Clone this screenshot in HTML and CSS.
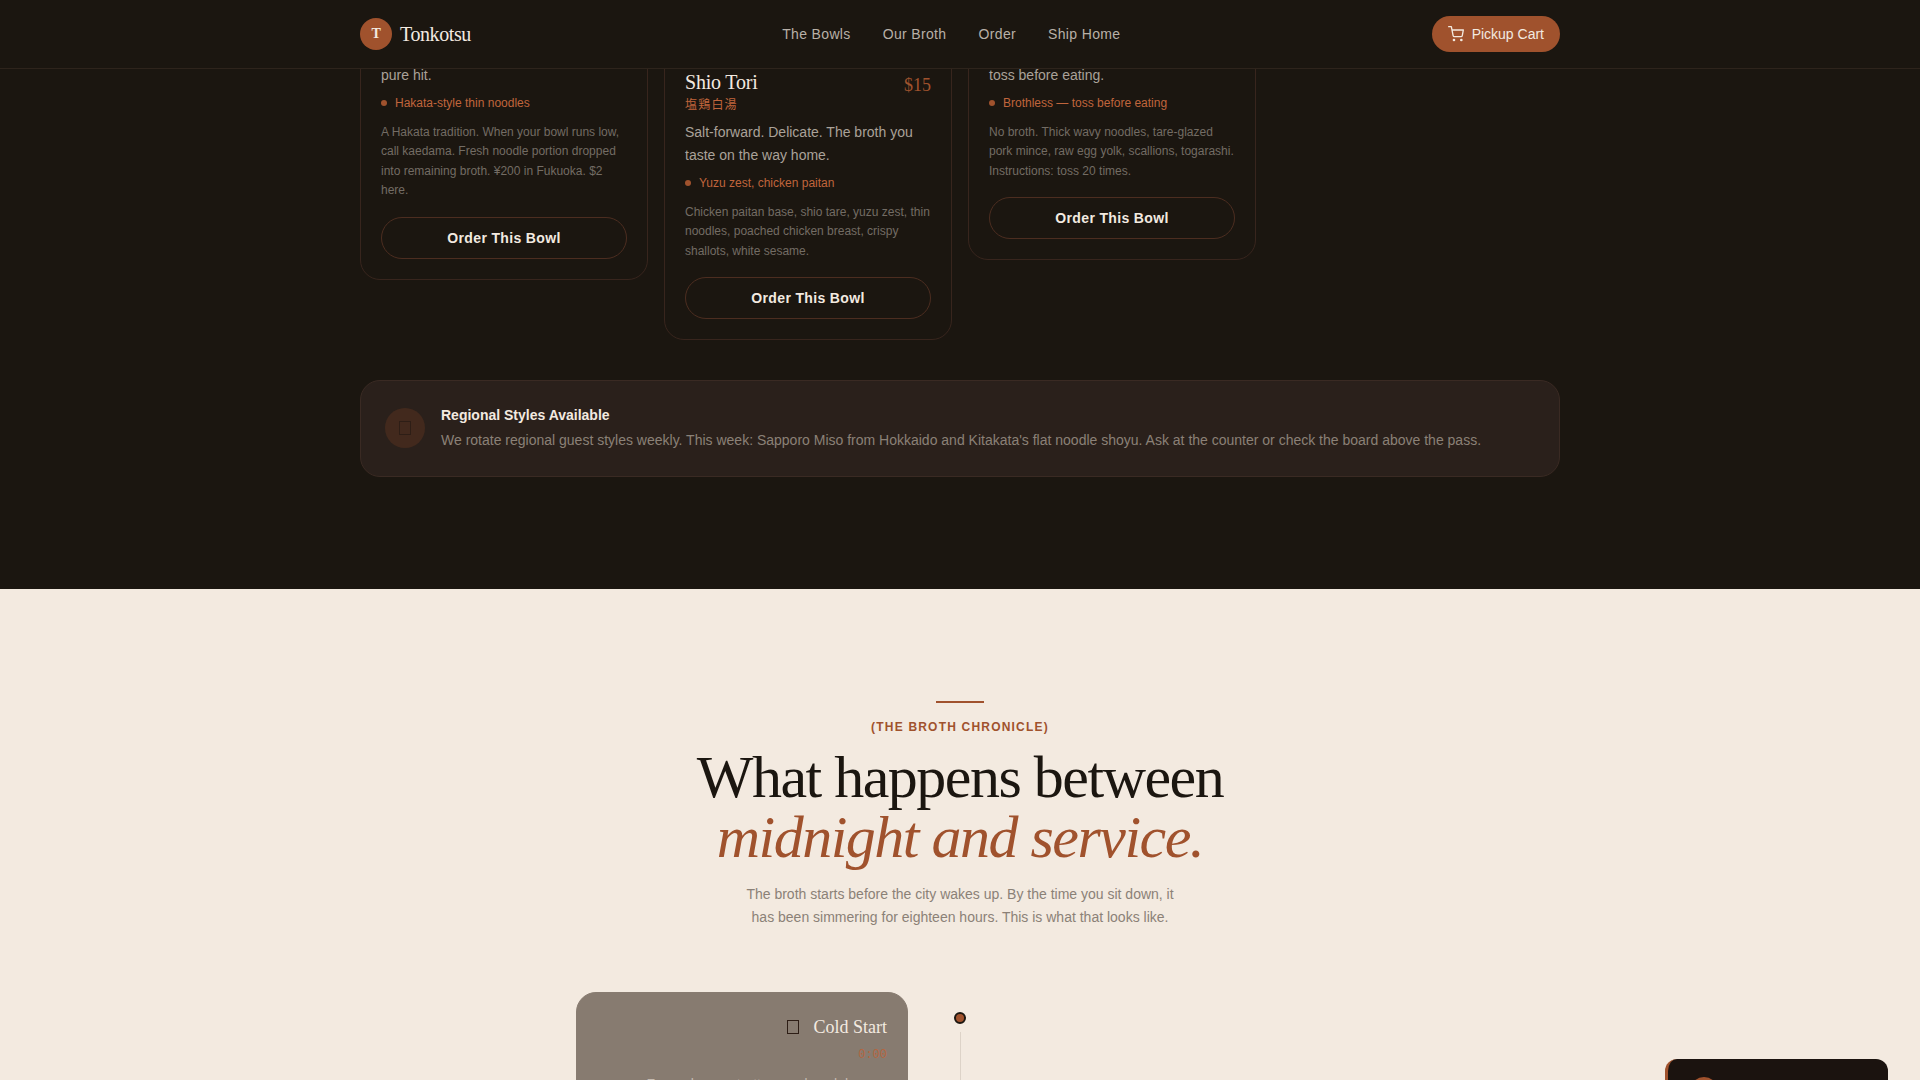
FILE: index.html
```html
<!DOCTYPE html>
<html lang="en">

<head>
    <meta charset="UTF-8">
    <meta name="viewport" content="width=device-width, initial-scale=1.0">
    <title>Tonkotsu</title>
    <link rel="stylesheet" href="styles.css">
</head>

<body>
    <header class="nav">
        <div class="container nav-inner">
            <a href="#" class="brand"><span class="brand-mark">T</span>Tonkotsu</a>
            <nav class="nav-links">
                <a href="#bowls">The Bowls</a>
                <a href="#broth">Our Broth</a>
                <a href="#order">Order</a>
                <a href="#ship">Ship Home</a>
            </nav>
            <button type="button" class="cart-button">
                <svg width="16" height="16" viewBox="0 0 24 24" fill="none" stroke="currentColor" stroke-width="2" stroke-linecap="round" stroke-linejoin="round" aria-hidden="true">
                    <circle cx="9" cy="21" r="1"></circle>
                    <circle cx="20" cy="21" r="1"></circle>
                    <path d="M1 1h4l2.68 13.39a2 2 0 0 0 2 1.61h9.72a2 2 0 0 0 2-1.61L23 6H6"></path>
                </svg>
                Pickup Cart
            </button>
        </div>
    </header>

    <main>
        <section class="bowls" id="bowls">
            <div class="container">
                <div class="bowl-grid">
                    <article class="bowl">
                        <p class="bowl-tagline">pure hit.</p>
                        <p class="bowl-note">Hakata-style thin noodles</p>
                        <p class="bowl-desc">A Hakata tradition. When your bowl runs low, call kaedama. Fresh noodle portion dropped into remaining broth. ¥200 in Fukuoka. $2 here.</p>
                        <button type="button" class="bowl-button">Order This Bowl</button>
                    </article>
                    <article class="bowl">
                        <div class="bowl-head">
                            <div>
                                <h3 class="bowl-name">Shio Tori</h3>
                                <span class="bowl-kanji" lang="ja">塩鶏白湯</span>
                            </div>
                            <span class="bowl-price">$15</span>
                        </div>
                        <p class="bowl-tagline">Salt-forward. Delicate. The broth you taste on the way home.</p>
                        <p class="bowl-note">Yuzu zest, chicken paitan</p>
                        <p class="bowl-desc">Chicken paitan base, shio tare, yuzu zest, thin noodles, poached chicken breast, crispy shallots, white sesame.</p>
                        <button type="button" class="bowl-button">Order This Bowl</button>
                    </article>
                    <article class="bowl">
                        <p class="bowl-tagline">toss before eating.</p>
                        <p class="bowl-note">Brothless — toss before eating</p>
                        <p class="bowl-desc">No broth. Thick wavy noodles, tare-glazed pork mince, raw egg yolk, scallions, togarashi. Instructions: toss 20 times.</p>
                        <button type="button" class="bowl-button">Order This Bowl</button>
                    </article>
                </div>

                <div class="regional">
                    <div class="regional-icon"><span class="glyph-box"></span></div>
                    <div>
                        <h4 class="regional-title">Regional Styles Available</h4>
                        <p class="regional-text">We rotate regional guest styles weekly. This week: Sapporo Miso from Hokkaido and Kitakata's flat noodle shoyu. Ask at the counter or check the board above the pass.</p>
                    </div>
                </div>
            </div>
        </section>

        <section class="broth" id="broth">
            <div class="section-head">
                <span class="section-rule"></span>
                <p class="section-label">(The Broth Chronicle)</p>
                <h2 class="section-title">What happens between<br><em>midnight and service.</em></h2>
                <p class="section-text">The broth starts before the city wakes up. By the time you sit down, it has been simmering for eighteen hours. This is what that looks like.</p>
            </div>

            <div class="timeline">
                <div class="step">
                    <div class="step-card">
                        <h3 class="step-title"><span class="glyph-box"></span>Cold Start</h3>
                        <span class="step-time">0:00</span>
                        <p class="step-text">Femur bones, trotters and neck bones.</p>
                    </div>
                    <div class="step-marker"></div>
                </div>
            </div>
        </section>
    </main>

    <aside class="toast">
        <span class="toast-icon"></span>
    </aside>
</body>

</html>
```

FILE: styles.css
```css
:root {
    --ink: #1b1610;
    --cream: #f3eae0;
    --rust: #a0522d;
    --rust-light: #c0653c;
    --sans: "Liberation Sans", Arial, "Noto Sans CJK JP", sans-serif;
    --serif: "Liberation Serif", "Times New Roman", serif;
    --mono: "Liberation Mono", "Courier New", monospace;
}

*,
*::before,
*::after {
    box-sizing: border-box;
    margin: 0;
    padding: 0;
}

body {
    font-family: var(--sans);
    font-size: 14px;
    line-height: 1.625;
    background-color: var(--cream);
    color: var(--ink);
    height: 100vh;
    overflow: hidden;
}

button {
    font-family: inherit;
    cursor: pointer;
}

.container {
    max-width: 1200px;
    margin: 0 auto;
}

/* Navigation */

.nav {
    position: fixed;
    top: 0;
    left: 0;
    right: 0;
    z-index: 10;
    background-color: var(--ink);
    border-bottom: 1px solid #2e241c;
}

.nav-inner {
    display: flex;
    justify-content: space-between;
    align-items: center;
    padding: 16px 0;
}

.brand {
    display: flex;
    align-items: center;
    gap: 8px;
    font-family: var(--serif);
    font-size: 20px;
    letter-spacing: -0.02em;
    color: var(--cream);
    text-decoration: none;
}

.brand-mark {
    width: 32px;
    height: 32px;
    border-radius: 50%;
    background-color: var(--rust);
    display: flex;
    justify-content: center;
    align-items: center;
    font-size: 14px;
    font-weight: bold;
}

.nav-links {
    display: flex;
    gap: 32px;
}

.nav-links a {
    color: #b8b0a7;
    letter-spacing: 0.025em;
    text-decoration: none;
}

.cart-button {
    display: flex;
    align-items: center;
    gap: 8px;
    height: 36px;
    padding: 0 16px;
    border: none;
    border-radius: 18px;
    background-color: var(--rust);
    color: var(--cream);
    font-size: 14px;
}

/* Bowls */

.bowls {
    background-color: var(--ink);
    padding-bottom: 112px;
}

.bowl-grid {
    display: grid;
    grid-template-columns: repeat(4, 1fr);
    align-items: start;
    gap: 16px;
}

.bowl {
    padding: 63px 20px 20px;
    border: 1px solid #38251d;
    border-radius: 20px;
}

.bowl-head {
    display: flex;
    justify-content: space-between;
    align-items: flex-start;
    margin: 5px 0 6px;
}

.bowl-name {
    font-family: var(--serif);
    font-size: 20px;
    font-weight: normal;
    line-height: 26px;
    letter-spacing: -0.01em;
    color: var(--cream);
}

.bowl-kanji {
    display: block;
    font-size: 12px;
    line-height: 20px;
    letter-spacing: 0.1em;
    color: var(--rust-light);
}

.bowl-price {
    font-family: var(--serif);
    font-size: 18px;
    line-height: 32px;
    color: var(--rust);
}

.bowl-tagline {
    margin-bottom: 8px;
    color: #aaa299;
}

.bowl-note {
    display: flex;
    align-items: center;
    gap: 8px;
    margin-bottom: 12px;
    font-size: 12px;
    line-height: 16px;
    color: var(--rust-light);
}

.bowl-note::before {
    content: "";
    width: 6px;
    height: 6px;
    border-radius: 50%;
    background-color: var(--rust);
}

.bowl-desc {
    font-size: 12px;
    margin-bottom: 16px;
    color: #736c64;
}

.bowl-button {
    width: 100%;
    height: 42px;
    border: 1px solid #4c2d20;
    border-radius: 21px;
    background-color: transparent;
    color: var(--cream);
    font-size: 14px;
    font-weight: bold;
    letter-spacing: 0.025em;
}

.regional {
    display: flex;
    align-items: center;
    gap: 16px;
    margin-top: 40px;
    padding: 24px;
    border: 1px solid #3a2a23;
    border-radius: 20px;
    background-color: #2a201b;
}

.regional-icon {
    width: 40px;
    height: 40px;
    border-radius: 50%;
    background-color: #42291d;
    display: flex;
    justify-content: center;
    align-items: center;
}

.glyph-box {
    width: 12px;
    height: 14px;
    border: 1px solid #2e1e16;
}

.regional-title {
    font-size: 14px;
    line-height: 20px;
    margin-bottom: 4px;
    color: var(--cream);
}

.regional-text {
    color: #8b8177;
}

/* Broth */

.broth {
    padding-top: 112px;
}

.section-head {
    text-align: center;
    margin-bottom: 64px;
}

.section-rule {
    display: block;
    width: 48px;
    height: 2px;
    margin: 0 auto 16px;
    background-color: var(--rust);
}

.section-label {
    font-size: 12px;
    font-weight: bold;
    line-height: 16px;
    letter-spacing: 0.1em;
    text-transform: uppercase;
    color: var(--rust);
    margin-bottom: 12px;
}

.section-title {
    font-family: var(--serif);
    font-size: 60px;
    font-weight: normal;
    line-height: 60px;
    letter-spacing: -0.025em;
    margin-bottom: 16px;
}

.section-title em {
    color: var(--rust);
}

.section-text {
    max-width: 448px;
    margin: 0 auto;
    color: #8b8177;
}

.timeline {
    max-width: 768px;
    margin: 0 auto;
}

.step {
    display: grid;
    grid-template-columns: 1fr 104px 1fr;
}

.step-card {
    padding: 20px;
    border: 1px solid #887c71;
    border-radius: 20px;
    background-color: #877b70;
    text-align: right;
}

.step-title {
    display: flex;
    justify-content: flex-end;
    align-items: center;
    gap: 14px;
    font-family: var(--serif);
    font-size: 18px;
    font-weight: normal;
    line-height: 28px;
    color: var(--cream);
}

.step-time {
    display: block;
    margin-bottom: 4px;
    font-family: var(--mono);
    font-size: 12px;
    line-height: 28px;
    color: #b5653f;
}

.step-text {
    color: #c4bab0;
}

.step-marker {
    display: flex;
    flex-direction: column;
    align-items: center;
    gap: 8px;
    padding-top: 20px;
}

.step-marker::before {
    content: "";
    width: 12px;
    height: 12px;
    border: 2px solid var(--ink);
    border-radius: 50%;
    background-color: var(--rust);
}

.step-marker::after {
    content: "";
    flex: 1;
    width: 1px;
    background-color: #ddd3c8;
}

/* Toast */

.toast {
    position: fixed;
    right: 32px;
    bottom: 0;
    width: 223px;
    height: 21px;
    overflow: hidden;
    padding: 18px 22px 0;
    border-left: 3px solid var(--rust);
    border-radius: 12px 12px 0 0;
    background-color: #1b130f;
}

.toast-icon {
    display: block;
    width: 28px;
    height: 28px;
    border-radius: 50%;
    background-color: var(--rust);
}
```
